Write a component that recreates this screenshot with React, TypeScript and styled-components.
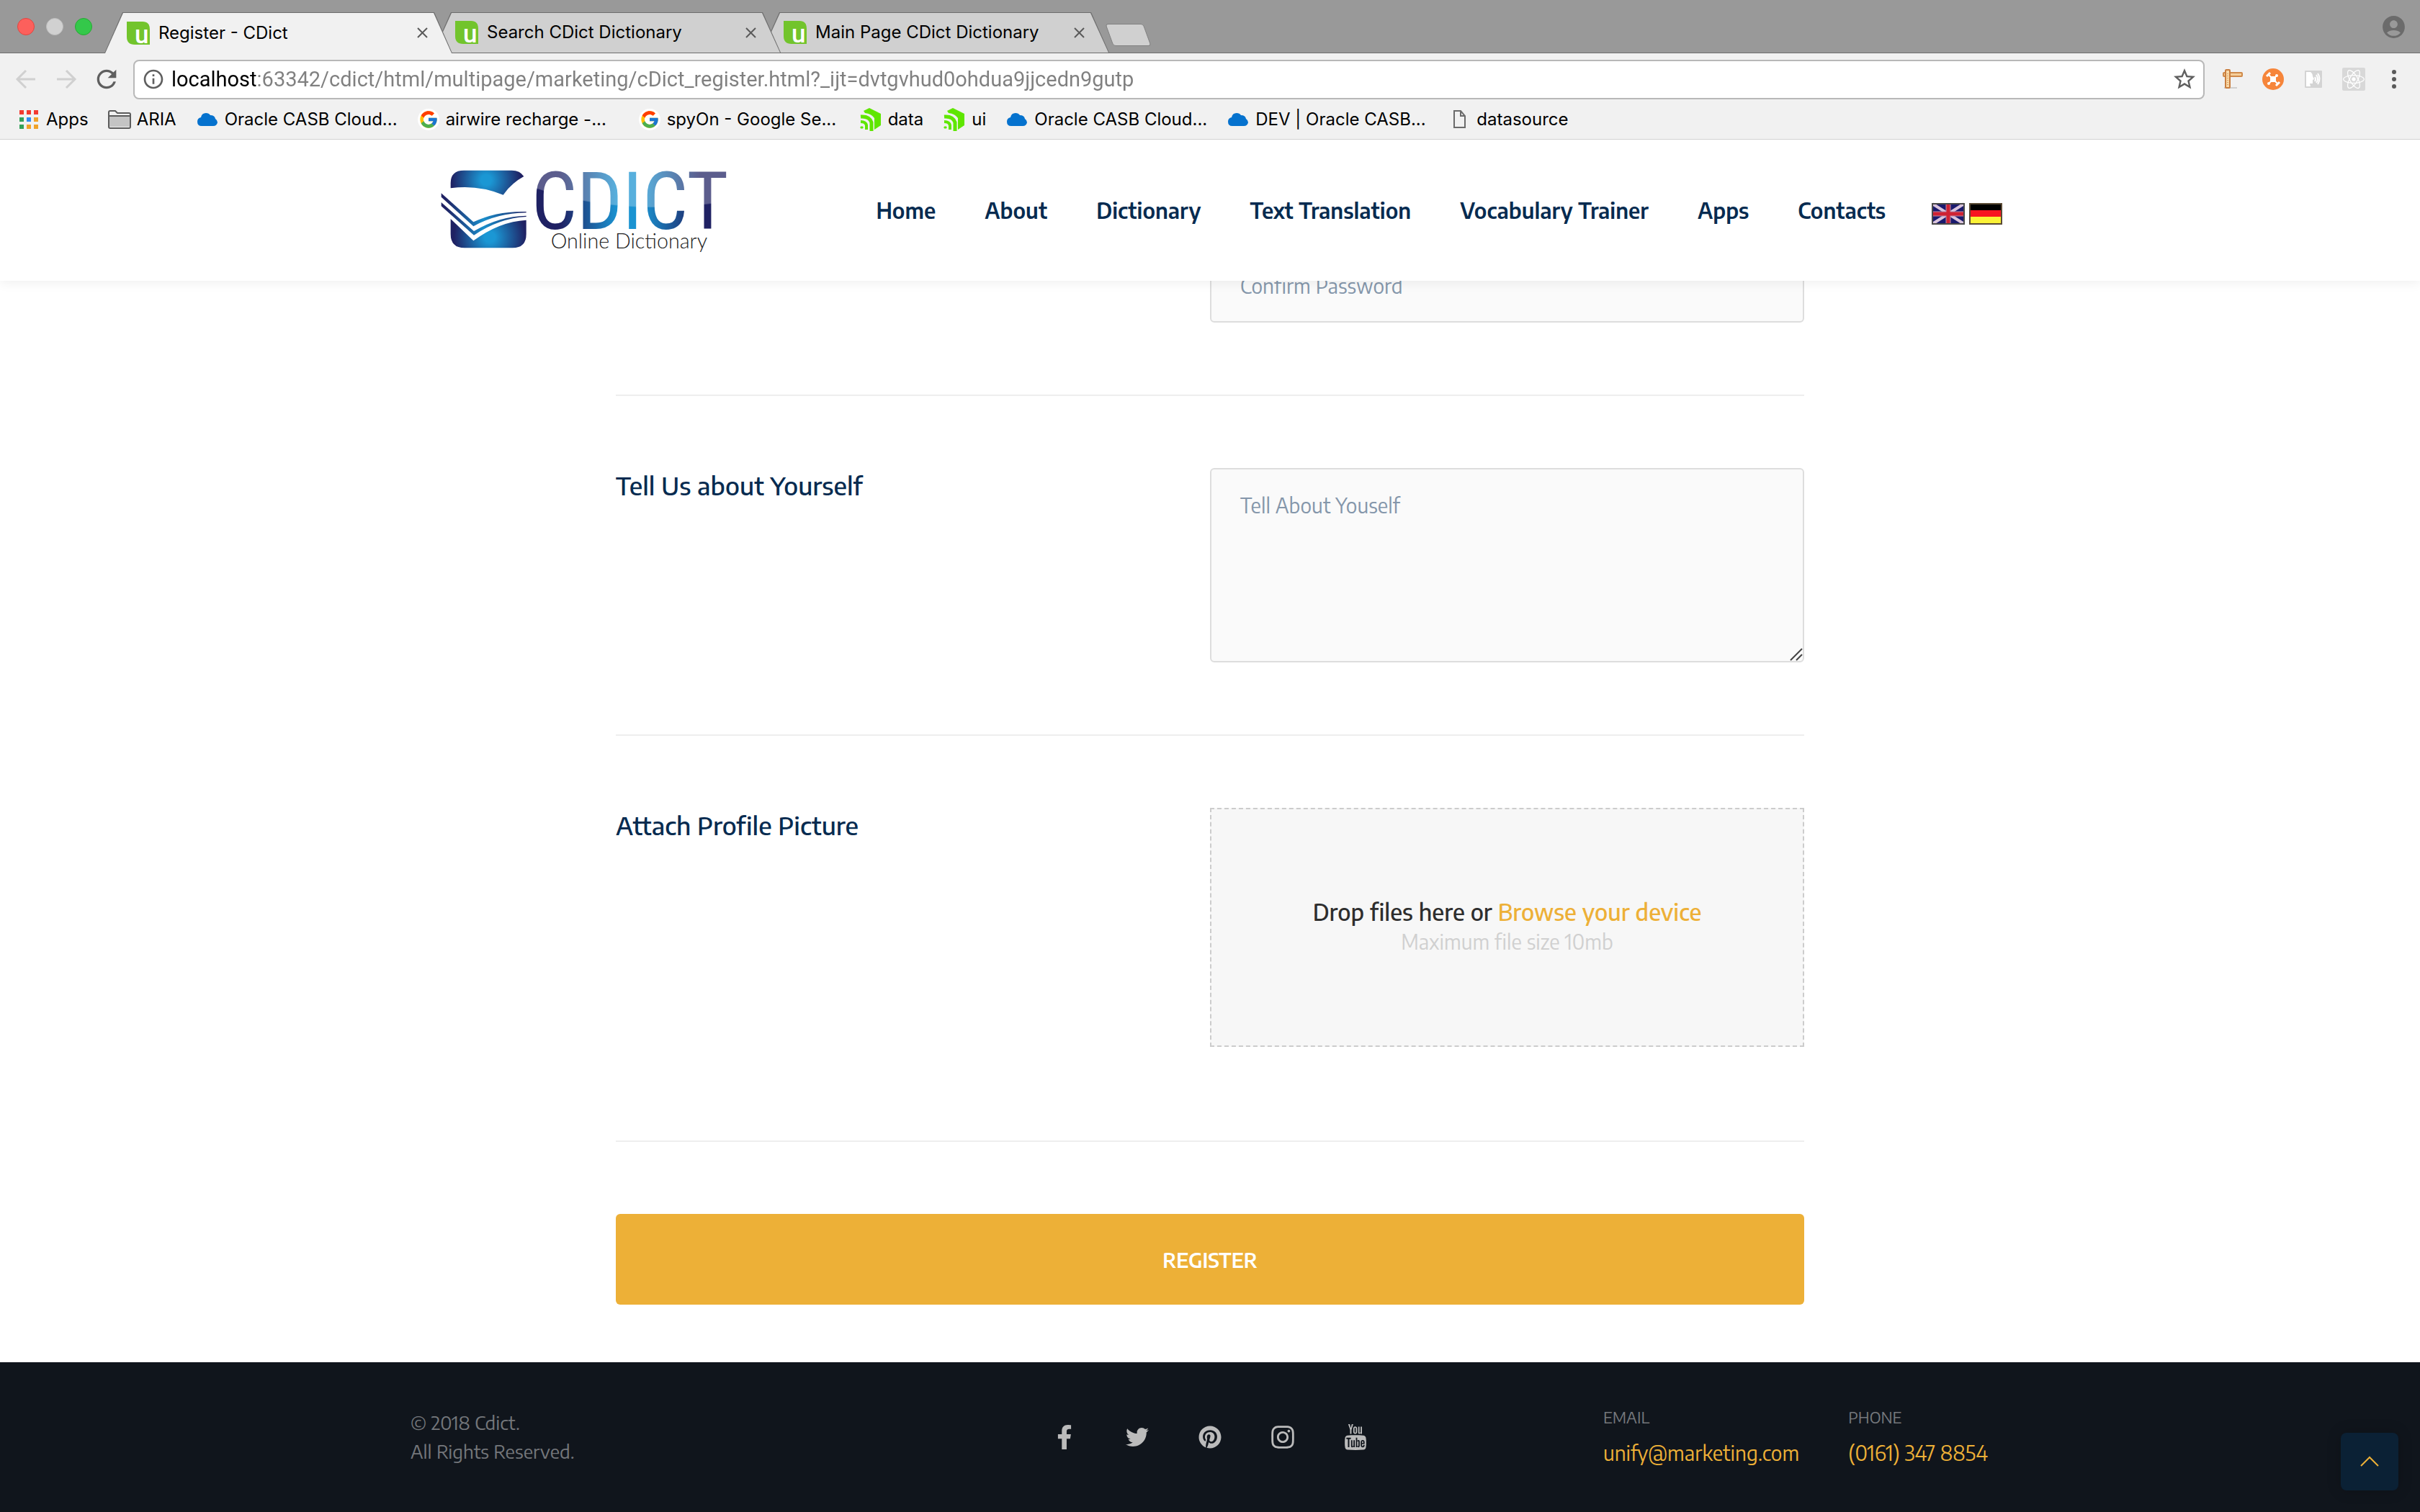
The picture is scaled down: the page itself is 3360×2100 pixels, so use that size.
import React from "react";
import styled, { createGlobalStyle, css } from "styled-components";
import { FcGoogle } from "react-icons/fc";
import { FaFacebookF, FaTwitter, FaPinterest, FaInstagram, FaReact } from "react-icons/fa";
import { TfiYoutube } from "react-icons/tfi";
import { MdAccountCircle, MdStarBorder, MdInfoOutline, MdRefresh } from "react-icons/md";

const color = {
  navy: "#062b50",
  amber: "#edb037",
  placeholder: "#8496aa",
  field: "#fafafa",
  fieldBorder: "#dddddd",
  rule: "#eeeeee",
  footer: "#10151c",
  chrome: "#f1f1f1",
  strip: "#999999",
  stripLine: "#6e6e6e",
};

const siteFont = `"Encode Sans", "Noto Sans", "Open Sans", sans-serif`;
const uiFont = `Inter, Roboto, "Liberation Sans", sans-serif`;

const GlobalStyle = createGlobalStyle`
  *, *::before, *::after { box-sizing: border-box; }
  body { margin: 0; background: #fff; font-family: ${siteFont}; }
  button, input, textarea { font: inherit; }
  a { color: inherit; text-decoration: none; }
  svg { display: block; overflow: visible; }
`;

const Page = styled.div`
  display: flex;
  flex-direction: column;
  min-height: 100vh;
`;

/* ---------- Browser window ---------- */

const BrowserBar = styled.div`
  position: relative;
  z-index: 3;
  background: ${color.chrome};
  border-bottom: 1px solid #d2d2d2;
  font-family: ${uiFont};
  color: #000;
`;

const TabStrip = styled.div`
  display: flex;
  align-items: flex-end;
  height: 74px;
  background: ${color.strip};
  box-shadow: inset 0 -1px ${color.stripLine};
`;

const WindowControls = styled.div`
  display: flex;
  align-self: center;
  gap: 16px;
  width: 145px;
  padding-left: 24px;
`;

const WindowButton = styled.button<{ $fill: string; $edge: string }>`
  width: 24px;
  height: 24px;
  padding: 0;
  border: 1px solid ${(p) => p.$edge};
  border-radius: 50%;
  background: ${(p) => p.$fill};
`;

const Tab = styled.div<{ $active?: boolean; $order: number }>`
  position: relative;
  z-index: ${(p) => p.$order};
  display: flex;
  align-items: center;
  gap: 12px;
  width: 483px;
  height: ${(p) => (p.$active ? 57 : 56)}px;
  margin-right: -27px;
  margin-bottom: ${(p) => (p.$active ? 0 : 1)}px;
  padding: 0 34px 0 31px;
  font-size: 24px;
  line-height: 32px;

  &::before,
  &::after {
    content: "";
    position: absolute;
    inset: 0;
    z-index: -1;
    background: ${color.stripLine};
    clip-path: polygon(0 100%, 25px 0, calc(100% - 25px) 0, 100% 100%);
  }

  &::after {
    inset: 1px 1px 0;
    background: ${(p) => (p.$active ? color.chrome : "#d0d0d0")};
  }
`;

const TabTitle = styled.span`
  flex: 1;
  white-space: nowrap;
`;

const IconButton = styled.button`
  display: flex;
  align-items: center;
  justify-content: center;
  padding: 0;
  border: 0;
  background: none;
  color: #5a5a5a;
`;

const NewTabButton = styled.button`
  width: 53px;
  height: 31px;
  margin: 0 0 10px 27px;
  padding: 0;
  border: 1px solid #808080;
  border-radius: 4px;
  background: #d0d0d0;
  transform: skewX(20deg);
`;

const ProfileButton = styled(IconButton)`
  align-self: center;
  margin: 0 18px 0 auto;
  color: #6b6b6b;
`;

const Toolbar = styled.div`
  display: flex;
  align-items: center;
  gap: 23px;
  height: 64px;
  padding: 8px 20px 0 22px;
`;

const ToolGroup = styled.div<{ $gap: number }>`
  display: flex;
  align-items: center;
  gap: ${(p) => p.$gap}px;
`;

const ToolButton = styled(IconButton)<{ $size: number; $dim?: boolean }>`
  width: ${(p) => p.$size}px;
  height: 32px;
  color: ${(p) => (p.$dim ? "#d0d0d0" : "#5f5f5f")};

  svg {
    flex: none;
  }
`;

const AddressBar = styled.div`
  flex: 1;
  display: flex;
  align-items: center;
  gap: 12px;
  height: 55px;
  padding: 0 10px 0 13px;
  border: 2px solid #b8b8b8;
  border-radius: 8px;
  background: #fff;
`;

const AddressInput = styled.input`
  flex: 1;
  min-width: 0;
  padding: 0;
  border: 0;
  outline: 0;
  font-family: Roboto, ${uiFont};
  font-size: 29px;
  line-height: 40px;
  color: #808080;
  background: linear-gradient(90deg, #000 119px, #808080 119px);
  background-clip: text;
  -webkit-background-clip: text;
  -webkit-text-fill-color: transparent;
`;

const BookmarkBar = styled.nav`
  display: flex;
  align-items: center;
  gap: 27px;
  height: 55px;
  padding-left: 24px;
`;

const Bookmark = styled.a<{ $wide?: boolean }>`
  display: flex;
  align-items: center;
  gap: 8px;
  font-size: 24px;
  line-height: 32px;
  white-space: nowrap;

  ${(p) =>
    p.$wide &&
    css`
      width: 280px;
    `}
`;

const BookmarkIcon = styled.span`
  display: flex;
  justify-content: center;
  flex: none;
  width: 32px;
`;

const GoogleDisc = styled.span`
  display: flex;
  padding: 1px;
  border-radius: 50%;
  background: #fff;
`;

/* ---------- Site header ---------- */

const SiteHeader = styled.header`
  position: relative;
  z-index: 2;
  background: #fff;
  box-shadow: 0 2px 16px rgba(0, 0, 0, 0.07);
`;

const HeaderInner = styled.div`
  display: flex;
  align-items: center;
  justify-content: space-between;
  max-width: 2280px;
  height: 196px;
  margin: 0 auto;
  padding: 0 40px 0 72px;
`;

const HeaderRight = styled.div`
  display: flex;
  align-items: center;
  gap: 64px;
`;

const MainNav = styled.nav`
  display: flex;
  gap: 68px;
  font-size: 30px;
  font-weight: 600;
  line-height: 40px;
  color: ${color.navy};
  white-space: nowrap;
`;

const Languages = styled.div`
  display: flex;
  gap: 6px;
  padding-top: 10px;
`;

/* ---------- Form ---------- */

const Main = styled.main`
  flex: 1;
  width: 100%;
  max-width: 1710px;
  margin: -46px auto 0;
  padding: 0 30px 80px;
`;

const FormRow = styled.div<{ $first?: boolean }>`
  display: grid;
  grid-template-columns: 1fr 1fr;
  align-items: start;
  padding: ${(p) => (p.$first ? 0 : 100)}px 0 100px;
  border-bottom: 2px solid ${color.rule};
`;

const RowLabel = styled.label`
  font-size: 35px;
  font-weight: 500;
  line-height: 48px;
  color: ${color.navy};
`;

const fieldStyle = css`
  display: block;
  width: 100%;
  border: 2px solid ${color.fieldBorder};
  border-radius: 6px;
  outline: 0;
  background: ${color.field};
  color: ${color.navy};
  font-size: 28px;
  line-height: 44px;

  &::placeholder {
    color: ${color.placeholder};
    opacity: 1;
  }
`;

const PasswordInput = styled.input`
  ${fieldStyle}
  grid-column: 2;
  height: 104px;
  padding: 0 40px;
`;

const TextAreaBox = styled.div`
  position: relative;
`;

const AboutInput = styled.textarea`
  ${fieldStyle}
  height: 270px;
  padding: 28px 40px;
  resize: vertical;

  &::-webkit-resizer {
    background: transparent;
  }
`;

const ResizeGrip = styled.svg`
  position: absolute;
  right: 3px;
  bottom: 3px;
  pointer-events: none;
`;

const DropZone = styled.div`
  display: flex;
  flex-direction: column;
  align-items: center;
  justify-content: center;
  height: 332px;
  margin-bottom: 30px;
  border: 2px dashed #cccccc;
  background: #f7f7f7;
`;

const DropText = styled.p`
  margin: 0;
  font-size: 32px;
  font-weight: 500;
  line-height: 40px;
  color: #2e2e2e;
`;

const BrowseLabel = styled.label`
  color: ${color.amber};
`;

const HiddenFile = styled.input`
  position: absolute;
  width: 1px;
  height: 1px;
  opacity: 0;
`;

const DropHint = styled.small`
  font-size: 28px;
  font-weight: 400;
  line-height: 44px;
  color: #d0d0d0;
`;

const RegisterButton = styled.button`
  display: block;
  width: 100%;
  height: 126px;
  margin-top: 100px;
  border: 0;
  border-radius: 6px;
  background: ${color.amber};
  color: #fff;
  font-size: 28px;
  font-weight: 600;
  text-transform: uppercase;
`;

/* ---------- Footer ---------- */

const Footer = styled.footer`
  background: ${color.footer};
`;

const FooterInner = styled.div`
  display: grid;
  grid-template-columns: 1fr auto 1fr;
  align-items: center;
  max-width: 2280px;
  height: 208px;
  margin: 0 auto;
  padding: 0 60px 0 30px;
`;

const Copyright = styled.p`
  margin: 0;
  font-size: 26px;
  font-weight: 400;
  line-height: 40px;
  color: #74777b;
`;

const Social = styled.div`
  display: flex;
  align-items: center;
  gap: 61px;
  margin-left: 30px;
  color: #bbbbbb;
`;

const SocialLink = styled.a`
  display: flex;
  justify-content: center;
  width: 40px;
`;

const Contacts = styled.div`
  display: flex;
  justify-content: flex-end;
  gap: 68px;
`;

const ContactLabel = styled.div`
  font-size: 22px;
  line-height: 44px;
  color: #75787c;
  text-transform: uppercase;
`;

const ContactLink = styled.a`
  display: block;
  font-size: 28px;
  line-height: 56px;
  color: ${color.amber};
  white-space: nowrap;
`;

const BackToTop = styled.button`
  position: fixed;
  right: 30px;
  bottom: 30px;
  z-index: 4;
  display: flex;
  align-items: center;
  justify-content: center;
  width: 80px;
  height: 80px;
  padding: 0;
  border: 0;
  border-radius: 8px;
  background: #0b2135;
  color: ${color.amber};
  box-shadow: 0 0 20px rgba(0, 0, 0, 0.2);
`;

/* ---------- Drawings ---------- */

const Favicon = () => (
  <svg width="32" height="32" viewBox="0 0 32 32">
    <path d="M0 0H22Q32 0 32 11V32H11Q0 32 0 21Z" fill="#72c42c" />
    <text x="11" y="30" fontFamily="Roboto" fontWeight="500" fontSize="35" fill="#fff">u</text>
  </svg>
);

const CloseIcon = () => (
  <svg width="15" height="15" viewBox="0 0 15 15" stroke="currentColor" strokeWidth="2">
    <path d="M1 1L14 14M14 1L1 14" />
  </svg>
);

const ArrowIcon = ({ forward }: { forward?: boolean }) => (
  <svg width="28" height="28" viewBox="0 0 28 28" fill="none" stroke="currentColor" strokeWidth="3">
    {forward ? <path d="M1 14H25M14 2L26 14L14 26" /> : <path d="M27 14H3M14 2L2 14L14 26" />}
  </svg>
);

const AppsIcon = () => (
  <svg width="26" height="26" viewBox="0 0 26 26">
    <path d="M0 0h6v6H0zM10 0h6v6h-6zM20 0h6v6h-6z" fill="#f33a30" />
    <path d="M0 10h6v6H0zM0 20h6v6H0z" fill="#34a15a" />
    <path d="M10 10h6v6h-6z" fill="#2d8cf5" />
    <path d="M20 10h6v6h-6zM20 20h6v6h-6zM10 20h6v6h-6z" fill="#f0a32a" />
  </svg>
);

const FolderIcon = () => (
  <svg width="32" height="26" viewBox="0 0 32 26" fill="none" stroke="#5c5c5c" strokeWidth="2">
    <path d="M1 3Q1 1 3 1H10L13 4H29Q31 4 31 6V23Q31 25 29 25H3Q1 25 1 23Z" fill="#f1f1f1" />
    <path d="M2 9H30V23H2Z" fill="#c4c4c4" stroke="none" />
    <path d="M1 8H31" />
  </svg>
);

const CloudIcon = () => (
  <svg width="28" height="18" viewBox="0 0 28 18" fill="#0572ce">
    <path d="M6 18Q0 18 0 12Q0 7 5 6Q6 0 12 0Q16 0 18 3Q24 3 25 8Q28 10 28 13Q27 18 22 18Z" />
  </svg>
);

const SproutIcon = () => (
  <svg width="30" height="32" viewBox="0 0 30 32" fill="none" stroke="#5fe600">
    <path d="M5 4L13 0L29 8V24L20 30V14Q16 8 7 7Z" fill="#5fe600" stroke="none" />
    <path d="M1 12Q13 11 16 20V32" strokeWidth="5" />
    <path d="M1 19Q8 19 9 24V30" strokeWidth="4" />
    <path d="M1 26H4V28H1Z" fill="#5fe600" strokeWidth="1" />
  </svg>
);

const DocIcon = () => (
  <svg width="17" height="25" viewBox="0 0 17 25" fill="none" stroke="#6b6b6b" strokeWidth="2">
    <path d="M1 1H10L16 8V24H1Z" />
    <path d="M10 1V8H16" />
  </svg>
);

const RulerIcon = () => (
  <svg width="28" height="28" viewBox="0 0 28 28">
    <path d="M2 26H20" stroke="#d0d0d0" strokeWidth="2" />
    <rect x="1" y="5" width="26" height="5" rx="1" fill="#f6cf9a" stroke="#cf8a4a" strokeWidth="2" />
    <rect x="4" y="1" width="6" height="25" rx="1" fill="#f9d9a8" stroke="#c97f40" strokeWidth="2" />
    <path d="M7 6V24" stroke="#e0a565" strokeWidth="2" strokeDasharray="1 2" />
  </svg>
);

const DroneIcon = () => (
  <svg width="30" height="30" viewBox="0 0 30 30">
    <circle cx="15" cy="15" r="15" fill="#f6853a" />
    <g stroke="#fff" strokeLinecap="round">
      <path d="M9 9L21 21M20 10L9 21" strokeWidth="2" />
      <path d="M6 11L11 6M19 24L24 19" strokeWidth="3" strokeLinecap="butt" />
    </g>
    <rect x="11" y="11" width="8" height="8" rx="2" fill="#fff" />
    <circle cx="20" cy="10" r="2" fill="#fff" />
    <circle cx="9" cy="21" r="2" fill="#fff" />
  </svg>
);

const SpeakIcon = () => (
  <svg width="24" height="24" viewBox="0 0 24 24">
    <rect width="24" height="24" rx="1" fill="#d4d4d4" />
    <path d="M2 2H8Q11 4 11 8L13 12L11 13V18H7L8 22H2Z" fill="#fff" />
    <path d="M14 9Q16 12 14 15M16 6Q20 12 16 17M18 4Q23 11 18 19" fill="none" stroke="#fff" strokeWidth="2" />
  </svg>
);

const ReactBadge = styled.span`
  display: flex;
  padding: 1px;
  border-radius: 2px;
  background: #d8d8d8;
  color: #fff;
`;

const DotsIcon = () => (
  <svg width="6" height="26" viewBox="0 0 6 26" fill="#5a5a5a">
    <circle cx="3" cy="3" r="3" />
    <circle cx="3" cy="13" r="3" />
    <circle cx="3" cy="23" r="3" />
  </svg>
);

const Logo = () => (
  <svg width="398" height="117" viewBox="96 99 1194 351" role="img" aria-label="CDict Online Dictionary">
    <defs>
      <radialGradient id="emblemTop" gradientUnits="userSpaceOnUse" cx="285" cy="147" r="145">
        <stop offset="0.15" stopColor="#1b97d4" />
        <stop offset="1" stopColor="#1f2163" />
      </radialGradient>
      <radialGradient id="emblemBottom" gradientUnits="userSpaceOnUse" cx="300" cy="385" r="150">
        <stop offset="0.15" stopColor="#1b97d4" />
        <stop offset="1" stopColor="#1f2163" />
      </radialGradient>
      <linearGradient id="pages" gradientUnits="userSpaceOnUse" x1="98" y1="0" x2="452" y2="0">
        <stop offset="0.05" stopColor="#1f2163" />
        <stop offset="0.5" stopColor="#1a8ecb" />
        <stop offset="1" stopColor="#1f2163" />
      </linearGradient>
      <linearGradient id="word" gradientUnits="userSpaceOnUse" x1="490" y1="0" x2="1284" y2="0">
        <stop offset="0.13" stopColor="#1f2163" />
        <stop offset="0.43" stopColor="#1a93d1" />
        <stop offset="0.56" stopColor="#1a93d1" />
        <stop offset="0.86" stopColor="#1f2163" />
      </linearGradient>
      <pattern id="gloss" patternUnits="userSpaceOnUse" x="400" y="90" width="1000" height="400">
        <g transform="translate(-400 -90)">
          <rect x="400" y="90" width="1000" height="400" fill="url(#word)" />
          <path d="M400 90H1400V215Q900 320 490 180L400 140Z" fill="#fff" fillOpacity="0.27" />
        </g>
      </pattern>
    </defs>
    <path d="M137 181V160Q137 107 192 107H392Q426 107 442 132Q390 160 356 209Q250 165 137 181Z" fill="url(#emblemTop)" />
    <path d="M98 202L232 322Q330 275 452 279V283Q330 285 232 340L98 218Z" fill="url(#pages)" />
    <path d="M98 240L234 360Q340 297 452 296V300Q340 306 234 377L98 256Z" fill="url(#pages)" />
    <path d="M137 309L232 400Q340 320 452 314V372Q452 430 395 430H195Q137 430 137 372Z" fill="url(#emblemBottom)" />
    <text x="474" y="350" fontFamily="Roboto Condensed, Roboto, sans-serif" fontSize="333" fill="url(#gloss)">CDICT</text>
    <text x="554" y="432" fontFamily="Lato, sans-serif" fontWeight="300" fontSize="86" fill="#222">Online Dictionary</text>
  </svg>
);

const FlagUK = () => (
  <svg width="46" height="30" viewBox="0 0 46 30">
    <rect width="46" height="30" fill="#1a1a6e" />
    <path d="M1 1L45 29M45 1L1 29" stroke="#d9c3dc" strokeWidth="4" />
    <path d="M23 0V30M0 15H46" stroke="#b88aa8" strokeWidth="7" />
    <path d="M23 0V30M0 15H46" stroke="#cf2233" strokeWidth="5" />
    <rect x="1" y="1" width="44" height="28" fill="none" stroke="#4a4a4a" strokeWidth="2" />
  </svg>
);

const FlagDE = () => (
  <svg width="46" height="30" viewBox="0 0 46 30">
    <rect width="46" height="10" fill="#000" />
    <rect y="10" width="46" height="9" fill="#f81420" />
    <rect y="19" width="46" height="11" fill="#fbf236" />
    <rect x="1" y="1" width="44" height="28" fill="none" stroke="#5a4a35" strokeWidth="2" />
  </svg>
);

/* ---------- Data ---------- */

const tabs = ["Register - CDict", "Search CDict Dictionary", "Main Page CDict Dictionary"];

const google = (
  <GoogleDisc>
    <FcGoogle size={28} />
  </GoogleDisc>
);

const bookmarks = [
  { label: "Apps", icon: <AppsIcon /> },
  { label: "ARIA", icon: <FolderIcon /> },
  { label: "Oracle CASB Cloud...", icon: <CloudIcon />, wide: true },
  { label: "airwire recharge -...", icon: google, wide: true },
  { label: "spyOn - Google Se...", icon: google, wide: true },
  { label: "data", icon: <SproutIcon /> },
  { label: "ui", icon: <SproutIcon /> },
  { label: "Oracle CASB Cloud...", icon: <CloudIcon />, wide: true },
  { label: "DEV | Oracle CASB...", icon: <CloudIcon />, wide: true },
  { label: "datasource", icon: <DocIcon /> },
];

const navItems = ["Home", "About", "Dictionary", "Text Translation", "Vocabulary Trainer", "Apps", "Contacts"];

const socials = [
  { name: "Facebook", icon: <FaFacebookF size={34} /> },
  { name: "Twitter", icon: <FaTwitter size={32} /> },
  { name: "Pinterest", icon: <FaPinterest size={32} /> },
  { name: "Instagram", icon: <FaInstagram size={36} /> },
  { name: "YouTube", icon: <TfiYoutube size={36} /> },
];

const url = "localhost:63342/cdict/html/multipage/marketing/cDict_register.html?_ijt=dvtgvhud0ohdua9jjcedn9gutp";

function Browser() {
  return (
    <BrowserBar>
      <TabStrip>
        <WindowControls>
          <WindowButton $fill="#fc605c" $edge="#e04640" aria-label="Close window" />
          <WindowButton $fill="#d1d1d1" $edge="#bdbdbd" aria-label="Minimise window" />
          <WindowButton $fill="#34c84a" $edge="#26a934" aria-label="Zoom window" />
        </WindowControls>
        {tabs.map((title, i) => (
          <Tab key={title} $active={i === 0} $order={tabs.length - i}>
            <Favicon />
            <TabTitle>{title}</TabTitle>
            <IconButton aria-label={`Close ${title}`}>
              <CloseIcon />
            </IconButton>
          </Tab>
        ))}
        <NewTabButton aria-label="New tab" />
        <ProfileButton aria-label="Profile">
          <MdAccountCircle size={37} />
        </ProfileButton>
      </TabStrip>
      <Toolbar>
        <ToolGroup $gap={28}>
          <ToolButton $size={28} $dim aria-label="Back">
            <ArrowIcon />
          </ToolButton>
          <ToolButton $size={28} $dim aria-label="Forward">
            <ArrowIcon forward />
          </ToolButton>
          <ToolButton $size={28} aria-label="Reload">
            <MdRefresh size={40} />
          </ToolButton>
        </ToolGroup>
        <AddressBar>
          <ToolButton $size={26} aria-label="Site information">
            <MdInfoOutline size={32} />
          </ToolButton>
          <AddressInput aria-label="Address" defaultValue={url} />
          <ToolButton $size={32} aria-label="Bookmark this page">
            <MdStarBorder size={36} />
          </ToolButton>
        </AddressBar>
        <ToolGroup $gap={24}>
          <ToolButton $size={32} aria-label="Ruler">
            <RulerIcon />
          </ToolButton>
          <ToolButton $size={32} aria-label="Drone">
            <DroneIcon />
          </ToolButton>
          <ToolButton $size={32} aria-label="Read aloud">
            <SpeakIcon />
          </ToolButton>
          <ToolButton $size={32} aria-label="React tools">
            <ReactBadge>
              <FaReact size={30} />
            </ReactBadge>
          </ToolButton>
          <ToolButton $size={32} aria-label="Menu">
            <DotsIcon />
          </ToolButton>
        </ToolGroup>
      </Toolbar>
      <BookmarkBar aria-label="Bookmarks">
        {bookmarks.map((b, i) => (
          <Bookmark key={i} href="#" $wide={b.wide}>
            <BookmarkIcon>{b.icon}</BookmarkIcon>
            {b.label}
          </Bookmark>
        ))}
      </BookmarkBar>
    </BrowserBar>
  );
}

export default function App() {
  return (
    <>
      <GlobalStyle />
      <Page>
        <Browser />
        <SiteHeader>
          <HeaderInner>
            <a href="#">
              <Logo />
            </a>
            <HeaderRight>
              <MainNav>
                {navItems.map((item) => (
                  <a key={item} href="#">
                    {item}
                  </a>
                ))}
              </MainNav>
              <Languages>
                <a href="#" aria-label="English">
                  <FlagUK />
                </a>
                <a href="#" aria-label="Deutsch">
                  <FlagDE />
                </a>
              </Languages>
            </HeaderRight>
          </HeaderInner>
        </SiteHeader>

        <Main>
          <form>
            <FormRow $first>
              <PasswordInput type="password" placeholder="Confirm Password" aria-label="Confirm Password" />
            </FormRow>
            <FormRow>
              <RowLabel htmlFor="about">Tell Us about Yourself</RowLabel>
              <TextAreaBox>
                <AboutInput id="about" placeholder="Tell About Youself" />
                <ResizeGrip width="16" height="16" viewBox="0 0 16 16" stroke="#444" strokeWidth="2">
                  <path d="M0 16L16 0M8 16L16 8" />
                </ResizeGrip>
              </TextAreaBox>
            </FormRow>
            <FormRow>
              <RowLabel as="div">Attach Profile Picture</RowLabel>
              <DropZone>
                <DropText>
                  Drop files here or <BrowseLabel htmlFor="picture">Browse your device</BrowseLabel>
                </DropText>
                <HiddenFile id="picture" type="file" />
                <DropHint>Maximum file size 10mb</DropHint>
              </DropZone>
            </FormRow>
            <RegisterButton type="button">Register</RegisterButton>
          </form>
        </Main>

        <Footer>
          <FooterInner>
            <Copyright>
              © 2018 Cdict.
              <br />
              All Rights Reserved.
            </Copyright>
            <Social>
              {socials.map((s) => (
                <SocialLink key={s.name} href="#" aria-label={s.name}>
                  {s.icon}
                </SocialLink>
              ))}
            </Social>
            <Contacts>
              <div>
                <ContactLabel>Email</ContactLabel>
                <ContactLink href="mailto:unify@marketing.com">unify@marketing.com</ContactLink>
              </div>
              <div>
                <ContactLabel>Phone</ContactLabel>
                <ContactLink href="tel:01613478854">(0161) 347 8854</ContactLink>
              </div>
            </Contacts>
          </FooterInner>
        </Footer>
        <BackToTop aria-label="Back to top">
          <svg width="26" height="14" viewBox="0 0 26 14" fill="none" stroke="currentColor" strokeWidth="2">
            <path d="M1 13L13 1L25 13" />
          </svg>
        </BackToTop>
      </Page>
    </>
  );
}
